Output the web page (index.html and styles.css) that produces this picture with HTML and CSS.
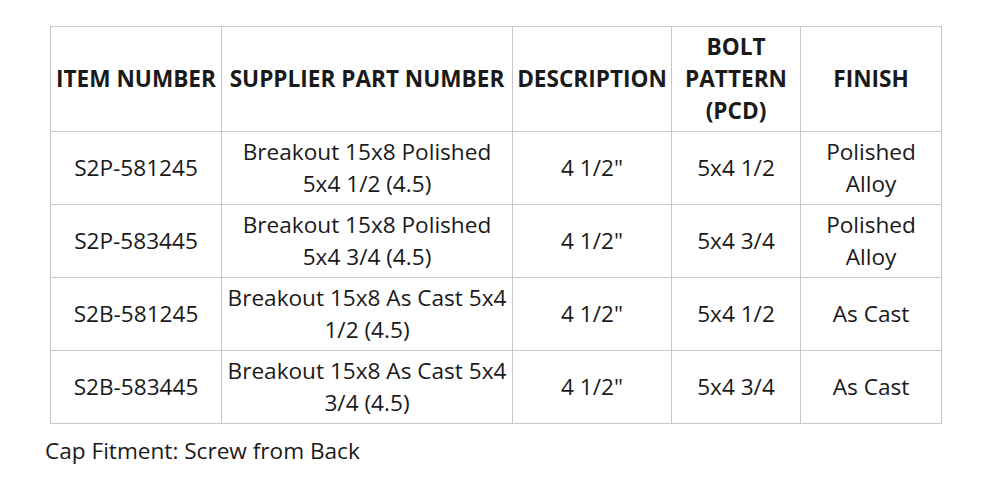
FILE: index.html
```html
<!DOCTYPE html>
<html>
<head>
<meta charset="utf-8">
<link rel="stylesheet" href="styles.css">
</head>
<body>
<div class="page">
<table class="spec">
<colgroup>
<col class="c1"><col class="c2"><col class="c3"><col class="c4"><col class="c5">
</colgroup>
<thead>
<tr><th>ITEM NUMBER</th><th>SUPPLIER PART NUMBER</th><th>DESCRIPTION</th><th>BOLT<br>PATTERN<br>(PCD)</th><th>FINISH</th></tr>
</thead>
<tbody>
<tr><td>S2P-581245</td><td>Breakout 15x8 Polished<br>5x4 1/2 (4.5)</td><td>4 1/2"</td><td>5x4 1/2</td><td>Polished<br>Alloy</td></tr>
<tr><td>S2P-583445</td><td>Breakout 15x8 Polished<br>5x4 3/4 (4.5)</td><td>4 1/2"</td><td>5x4 3/4</td><td>Polished<br>Alloy</td></tr>
<tr><td>S2B-581245</td><td>Breakout 15x8 As Cast 5x4<br>1/2 (4.5)</td><td>4 1/2"</td><td>5x4 1/2</td><td>As Cast</td></tr>
<tr><td>S2B-583445</td><td>Breakout 15x8 As Cast 5x4<br>3/4 (4.5)</td><td>4 1/2"</td><td>5x4 3/4</td><td>As Cast</td></tr>
</tbody>
</table>
<p class="note">Cap Fitment: Screw from Back</p>
</div>
</body>
</html>
```
FILE: styles.css
```css
html, body { margin: 0; padding: 0; background: #fff; }
.page {
  padding: 26px 0 0 50px;
  font-family: "Open Sans", sans-serif;
  color: #1a1a1a;
  font-size: 22.6px;
  line-height: 32px;
}
.spec {
  border-collapse: collapse;
  table-layout: fixed;
  width: 891px;
}
.c1 { width: 171px; }
.c2 { width: 291px; }
.c3 { width: 159px; }
.c4 { width: 129px; }
.c5 { width: 141px; }
.spec th, .spec td {
  border: 1px solid #c8c8c8;
  text-align: center;
  vertical-align: middle;
  padding: 0;
  white-space: nowrap;
}
.spec th { font-weight: 700; height: 104px; }
.spec td { height: 72px; }
.note { margin: 11px 0 0 -5px; }
```
